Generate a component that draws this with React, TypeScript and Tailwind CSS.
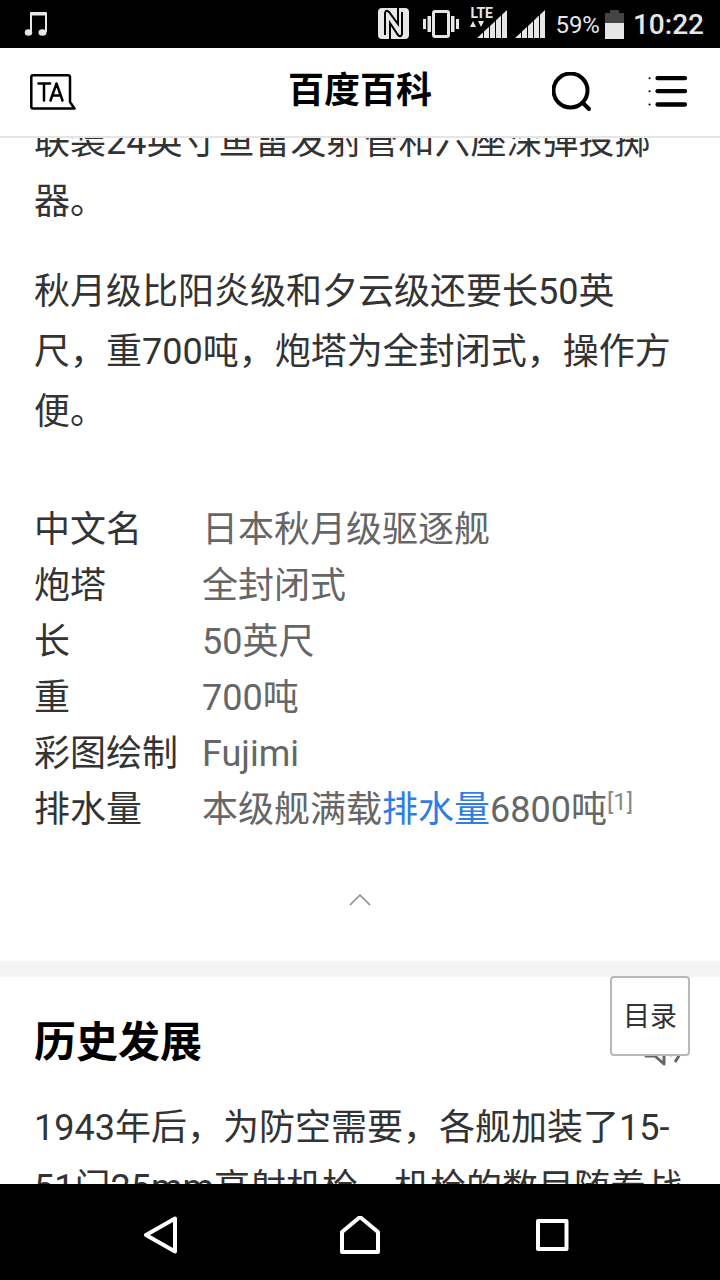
const FONT = "font-['Roboto','Noto_Sans_CJK_SC',sans-serif]"

const facts = [
  { name: '中文名', value: '日本秋月级驱逐舰' },
  { name: '炮塔', value: '全封闭式' },
  { name: '长', value: '50英尺' },
  { name: '重', value: '700吨' },
  { name: '彩图绘制', value: 'Fujimi' },
]

function SignalBars() {
  return (
    <svg className="h-7 w-[30px]" viewBox="0 0 30 28" fill="#e6e6e6">
      <path d="M0 28L6 22.400V28zM7 21.500L12 16.800V28H7zM13 15.900L18 11.200V28H13zM19 10.300L24 5.600V28H19zM25 4.700L30 0V28H25z" />
    </svg>
  )
}

function StatusBar() {
  return (
    <div className="flex h-12 shrink-0 items-center bg-black pl-6 pr-4 text-[#e6e6e6]">
      <svg className="h-6 w-6" viewBox="0 0 24 24" fill="#e6e6e6">
        <path d="M7 0H22Q23 0 23 1V20H21V3.500H8V20H6V1Q6 0 7 0z" />
        <ellipse cx="4.500" cy="20.500" rx="3.700" ry="3.300" />
        <ellipse cx="18.500" cy="20.500" rx="4" ry="3.300" />
      </svg>
      <svg className="ml-auto h-8 w-[31px]" viewBox="0 0 31 32">
        <rect width="31" height="31" rx="4" fill="#e6e6e6" />
        <path d="M7 27V5Q8 1 11 4L20 16V0M24 4V26Q23 30 20 27L12 15V31" fill="none" stroke="#000" strokeWidth="2" />
      </svg>
      <svg className="ml-[14px] h-7 w-9" viewBox="0 0 36 28" fill="#e6e6e6">
        <rect x="10.500" y="1.500" width="15" height="25" rx="1.500" fill="none" stroke="#e6e6e6" strokeWidth="3" />
        <path d="M0 9h3v10H0zM4.500 6h3.500v16h-3.500zM28 6h3.500v16H28zM33 9h3v10h-3z" />
      </svg>
      <div className="relative ml-[18px] h-7">
        <SignalBars />
        <span className="absolute -left-[7px] -top-[5px] text-sm leading-4 font-bold">LTE</span>
        <svg className="absolute -left-[7px] top-[11px] h-[6px] w-[14px]" viewBox="0 0 14 6" fill="#e6e6e6">
          <path d="M3 0L6 6H0zM8 0h6L11 6z" />
        </svg>
      </div>
      <div className="ml-2">
        <SignalBars />
      </div>
      <span className="ml-[10px] pt-0.5 text-2xl">59%</span>
      <svg className="ml-[5px] h-[29px] w-[19px]" viewBox="0 0 19 29">
        <path d="M0 3H5V0H14V3H19V13H0z" fill="#444" />
        <path d="M0 13H19V29H0z" fill="#e6e6e6" />
      </svg>
      <span className="ml-[9px] pt-0.5 text-[28px] font-medium">10:22</span>
    </div>
  )
}

function Header() {
  return (
    <header className="flex h-[90px] shrink-0 items-center justify-between border-b-2 border-[#e5e5e5] bg-white pl-[30px] pr-8">
      <button aria-label="TA" className="w-[138px]">
        <svg className="h-9 w-[46px]" viewBox="0 0 46 36" fill="none" stroke="#000" strokeWidth="2.500" strokeLinecap="round" strokeLinejoin="round">
          <path d="M3 1.300H38Q40 1.300 40 3V28L44.500 34.500H3Q1.300 34.500 1.300 32.500V3Q1.300 1.300 3 1.300z" />
          <path d="M8.500 9.500H20M14 9.500V26.500M20.500 26.500L26.500 9.500L32.500 26.500M22.500 21.500H30.500" />
        </svg>
      </button>
      <h1 className="pb-0.5 text-4xl font-bold text-black">百度百科</h1>
      <div className="flex items-center gap-[56px]">
        <button aria-label="搜索">
          <svg className="h-10 w-10" viewBox="0 0 40 40" fill="none" stroke="#000" strokeWidth="4" strokeLinecap="round">
            <circle cx="18.500" cy="18.500" r="17" />
            <path d="M31.500 31.500L37 37" />
          </svg>
        </button>
        <button aria-label="菜单">
          <svg className="h-8 w-10" viewBox="0 0 40 32" fill="none" stroke="#000" strokeWidth="4.300" strokeLinecap="round">
            <path d="M9.500 2.200H37M9.500 15.200H37M9.500 28.500H37" />
            <path d="M1.500 2.200h.1M1.500 15.200h.1M1.500 28.500h.1" strokeWidth="2" />
          </svg>
        </button>
      </div>
    </header>
  )
}

function FactTable() {
  return (
    <table className="mt-[60px] w-full text-left text-4xl/[56px]">
      <tbody>
        {facts.map((fact) => (
          <tr key={fact.name}>
            <th scope="row" className="w-[168px] p-0 font-normal text-[#333]">{fact.name}</th>
            <td className="p-0 text-[#666]">{fact.value}</td>
          </tr>
        ))}
        <tr>
          <th scope="row" className="w-[168px] p-0 font-normal text-[#333]">排水量</th>
          <td className="p-0 text-[#666]">
            本级舰满载<a href="#displacement" className="text-[#2f7de1]">排水量</a>6800吨
            <sup className="text-2xl leading-none text-[#888]">[1]</sup>
          </td>
        </tr>
      </tbody>
    </table>
  )
}

function NavBar() {
  return (
    <nav className="flex h-24 shrink-0 items-center justify-center gap-[136px] bg-black pt-2">
      <button aria-label="返回">
        <svg className="h-10 w-14" viewBox="0 0 56 40" fill="none" stroke="#fff" strokeWidth="4" strokeLinejoin="round">
          <path d="M6 19L35 2.500V35.500z" />
        </svg>
      </button>
      <button aria-label="主页">
        <svg className="h-10 w-14" viewBox="0 0 56 40" fill="none" stroke="#fff" strokeWidth="4" strokeLinejoin="round">
          <path d="M10 36V16L28 1L46 16V36z" />
        </svg>
      </button>
      <button aria-label="最近任务">
        <svg className="h-10 w-14" viewBox="0 0 56 40" fill="none" stroke="#fff" strokeWidth="4" strokeLinejoin="round">
          <path d="M14 5H42.500V33H14z" />
        </svg>
      </button>
    </nav>
  )
}

export default function App() {
  return (
    <div className={`flex h-screen flex-col bg-white text-[#333] ${FONT}`}>
      <StatusBar />
      <Header />
      <div className="relative min-h-0 flex-1 overflow-hidden">
        <main className="-mt-[26px]">
          <section className="px-[34px] text-4xl/[60px]">
            <p>联装24英寸鱼雷发射管和六座深弹投掷器。</p>
            <p className="mt-[30px]">秋月级比阳炎级和夕云级还要长50英尺，重700吨，炮塔为全封闭式，操作方便。</p>
            <FactTable />
            <button aria-label="收起" className="mx-auto mt-[54px] block">
              <svg className="h-4 w-6" viewBox="0 0 24 16" fill="none" stroke="#888" strokeWidth="1.500">
                <path d="M2 13L12 3L22 13" />
              </svg>
            </button>
          </section>
          <div className="mt-[53px] h-4 bg-[#f4f4f4]" />
          <section className="px-[34px] pt-[34px]">
            <div className="flex items-center justify-between">
              <h2 className="text-[42px]/[64px] font-bold text-black">历史发展</h2>
              <button aria-label="播放">
                <svg className="h-12 w-11" viewBox="0 0 44 48" fill="none" stroke="#666" strokeWidth="3" strokeLinejoin="round">
                  <path d="M4 15H12L22 6V45L13 37H4zM28 15Q34 26 28 37M34 8Q46 26 33 43" />
                </svg>
              </button>
            </div>
            <p className="mt-[23px] text-4xl/[60px]">1943年后，为防空需要，各舰加装了15-51门25mm高射机枪，机枪的数目随着战争的进行而增加。</p>
          </section>
        </main>
        <button className="absolute bottom-32 right-[30px] h-20 w-20 rounded-sm border-2 border-[#b8b8b8] bg-white pt-0.5 text-[27px]">目录</button>
      </div>
      <NavBar />
    </div>
  )
}
